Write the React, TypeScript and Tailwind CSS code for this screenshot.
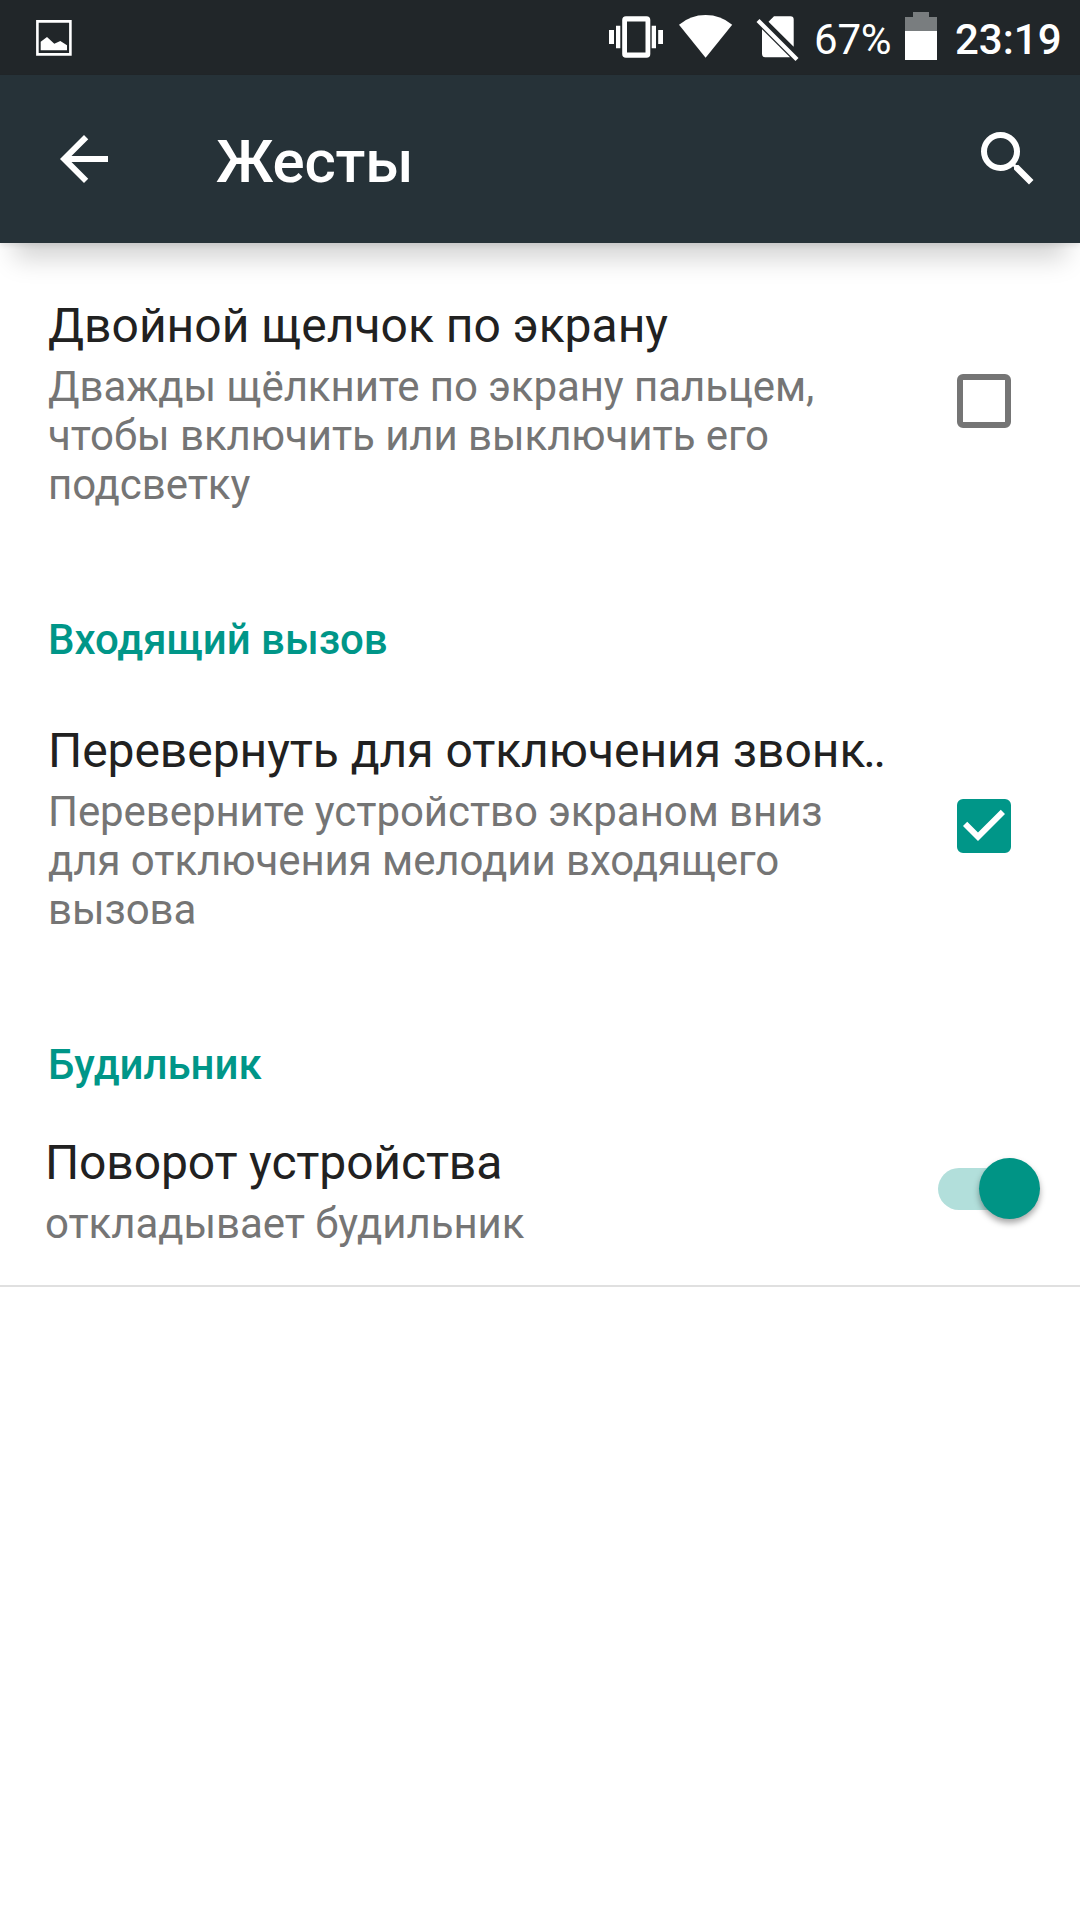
import { useState } from "react";
import type { ReactNode } from "react";

function StatusBar() {
  return (
    <div className="flex h-[75px] items-start bg-[#212629] pl-[36px] pr-[18px] text-white">
      <svg className="mt-[20px]" width="36" height="36" viewBox="0 0 36 36" fill="none">
        <path d="M1.4 1.4h33v33h-33z" stroke="#fff" strokeWidth="2.6" />
        <path d="M4.7 21.7L11 17l7.3 6.7 6-2.7 6.7 4.3v5H4.7z" fill="#fff" />
      </svg>
      <div className="ml-auto flex items-start">
        {/* Vibrate */}
        <svg className="mt-[16px]" width="54" height="42" viewBox="0 0 54 42" fill="#fff">
          <path d="M0 14h5v14H0zM7 9.7h4.3v22.6H7zM42.7 9.7H47v22.6h-4.3zM49.2 14H54v14h-4.8z" />
          <path d="M17 .3h20.5a3.8 3.8 0 0 1 3.8 3.8v33.8a3.8 3.8 0 0 1-3.8 3.8H17a3.8 3.8 0 0 1-3.8-3.8V4.1A3.8 3.8 0 0 1 17 .3zm1 5.3v30.8h18.5V5.6z" fillRule="evenodd" />
        </svg>
        {/* Wi-Fi */}
        <svg className="ml-[16px] mt-[15px]" width="54" height="43" viewBox="0 0 54 43" fill="#fff">
          <path d="M26.6 42.7L0 9.7Q11.5 0 26.6 0T53.2 9.7z" />
        </svg>
        {/* No SIM */}
        <svg className="ml-[23px] mt-[16px]" width="43" height="46" viewBox="0 0 43 46" fill="#fff">
          <path d="M18 .2h16.5a3.2 3.2 0 0 1 3.2 3.2v27.3L12.5 5.7zM6 13.3l28 28H9.2A3.2 3.2 0 0 1 6 38.1z" />
          <path d="M3.5 3l39 39-3 3-39-39z" />
        </svg>
        <span className="ml-[15px] mt-[19px] w-[91px] text-[42px] leading-none tracking-[-0.2px]">67%</span>
        <svg className="mt-[12px]" width="32" height="48" viewBox="0 0 32 48">
          <path d="M8 0h16v5h8v14H0V5h8z" fill="#797d7f" />
          <path d="M0 19h32v29H0z" fill="#fff" />
        </svg>
        <span className="ml-[18px] mt-[19px] w-[107px] text-[42px] font-medium leading-none">23:19</span>
      </div>
    </div>
  );
}

function AppBar() {
  return (
    <header className="relative z-10 flex h-[168px] items-center bg-[#263238] pl-[60px] pr-[45px] text-white shadow-[0_3px_5px_rgba(0,0,0,0.08),0_30px_24px_-14px_rgba(0,0,0,0.17)]">
      <svg width="48" height="48" viewBox="4 4 16 16" fill="#fff">
        <path d="M20 11H7.83l5.59-5.59L12 4l-8 8 8 8 1.41-1.41L7.83 13H20v-2z" />
      </svg>
      <h1 className="ml-[108px] pt-[6px] text-[60px] font-medium leading-[72px] tracking-[-0.2px]">Жесты</h1>
      <svg className="ml-auto" width="54" height="54" viewBox="3 3 18 18" fill="#fff">
        <path d="M15.5 14h-.79l-.28-.27A6.471 6.471 0 0 0 16 9.5 6.5 6.5 0 1 0 9.5 16c1.61 0 3.09-.59 4.23-1.57l.27.28v.79l5 4.99L20.49 19l-4.99-5zm-6 0C7.01 14 5 11.99 5 9.5S7.01 5 9.5 5 14 7.01 14 9.5 11.99 14 9.5 14z" />
      </svg>
    </header>
  );
}

interface PreferenceProps {
  title: ReactNode;
  lines: string[];
  children: ReactNode;
}

function Preference({ title, lines, children }: PreferenceProps) {
  return (
    <div className="flex h-[256px] items-center pl-[48px] pr-[69px]">
      <div className="pt-[4px]">
        <div className="whitespace-nowrap text-[48px] leading-[56px] text-[#212121]">{title}</div>
        <div className="mt-[8px] whitespace-nowrap text-[42px] leading-[49px] tracking-[-0.07px] text-[#757575]">
          {lines.map((line) => (
            <div key={line}>{line}</div>
          ))}
        </div>
      </div>
      <div className="ml-auto">{children}</div>
    </div>
  );
}

function Checkbox({ initial }: { initial: boolean }) {
  const [checked, setChecked] = useState(initial);
  return (
    <button type="button" role="checkbox" aria-checked={checked} onClick={() => setChecked(!checked)} className="block">
      <svg width="54" height="54" viewBox="3 3 18 18" fill={checked ? "#009688" : "#757575"}>
        {checked ? (
          <path d="M19 3H5a2 2 0 0 0-2 2v14a2 2 0 0 0 2 2h14a2 2 0 0 0 2-2V5a2 2 0 0 0-2-2zm-9 14l-5-5 1.41-1.41L10 14.17l7.59-7.59L19 8l-9 9z" />
        ) : (
          <path d="M19 5v14H5V5h14m0-2H5a2 2 0 0 0-2 2v14a2 2 0 0 0 2 2h14a2 2 0 0 0 2-2V5a2 2 0 0 0-2-2z" />
        )}
      </svg>
    </button>
  );
}

function Switch({ initial }: { initial: boolean }) {
  const [on, setOn] = useState(initial);
  return (
    <button
      type="button"
      role="switch"
      aria-checked={on}
      onClick={() => setOn(!on)}
      className="flex h-[62px] w-[102px] items-center"
    >
      <span className={`flex h-[42px] w-[84px] items-center rounded-full ${on ? "bg-[#b2dfdb]" : "bg-[#b9b9b9]"}`}>
        <span
          className={`-mt-px size-[61px] shrink-0 rounded-full shadow-[0_4px_6px_rgba(0,0,0,0.35)] ${
            on ? "ml-[41px] bg-[#009485]" : "bg-[#f1f1f1]"
          }`}
        />
      </span>
    </button>
  );
}

function Category({ children }: { children: ReactNode }) {
  return (
    <h2 className="pt-[86px] pb-[33px] pl-[48px] text-[42px] font-medium leading-[50px] tracking-[-0.05px] text-[#009688]">
      {children}
    </h2>
  );
}

export default function App() {
  return (
    <div className="flex h-[1920px] w-[1080px] flex-col overflow-hidden bg-white font-['Roboto',sans-serif]">
      <StatusBar />
      <AppBar />
      <main className="pt-[30px]">
        <Preference
          title="Двойной щелчок по экрану"
          lines={["Дважды щёлкните по экрану пальцем,", "чтобы включить или выключить его", "подсветку"]}
        >
          <Checkbox initial={false} />
        </Preference>
        <Category>Входящий вызов</Category>
        <Preference
          title={
            <>
              <span className="tracking-[-0.06px]">Перевернуть для отключения звон</span>
              <span className="tracking-[-2.2px]">к..</span>
            </>
          }
          lines={["Переверните устройство экраном вниз", "для отключения мелодии входящего", "вызова"]}
        >
          <Checkbox initial={true} />
        </Preference>
        <Category>Будильник</Category>
        <div className="flex h-[164px] items-start border-b-2 border-[#e0e0e0] pl-[45px] pr-[40px]">
          <div className="pt-[12px]">
            <div className="text-[48px] leading-[56px] tracking-[-0.14px] text-[#212121]">Поворот устройства</div>
            <div className="mt-[8px] text-[42px] leading-[49px] tracking-[-0.07px] text-[#757575]">откладывает будильник</div>
          </div>
          <div className="mt-[35px] ml-auto">
            <Switch initial={true} />
          </div>
        </div>
      </main>
    </div>
  );
}
